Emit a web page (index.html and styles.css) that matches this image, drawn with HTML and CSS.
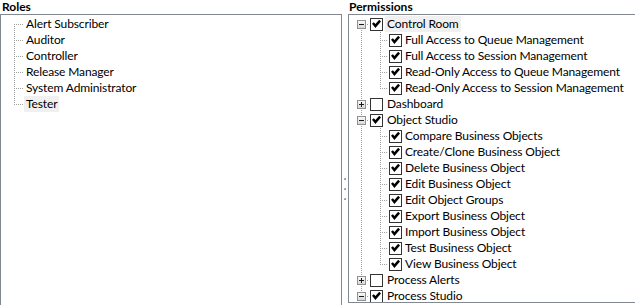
FILE: index.html
```html
<!DOCTYPE html>
<html>
<head>
<meta charset="utf-8">
<link rel="stylesheet" href="styles.css">
</head>
<body>
<div class="app">
  <section class="pane pane-roles">
    <div class="pane-title">Roles</div>
    <div class="box box-roles">
      <ul class="tree roles-tree">
        <li><div class="row"><span class="label">Alert Subscriber</span></div></li>
        <li><div class="row"><span class="label">Auditor</span></div></li>
        <li><div class="row"><span class="label">Controller</span></div></li>
        <li><div class="row"><span class="label">Release Manager</span></div></li>
        <li><div class="row"><span class="label">System Administrator</span></div></li>
        <li><div class="row"><span class="label selected">Tester</span></div></li>
      </ul>
    </div>
  </section>
  <div class="splitter">
    <span class="grip"></span>
    <span class="grip"></span>
    <span class="grip"></span>
  </div>
  <section class="pane pane-perms">
    <div class="pane-title">Permissions</div>
    <div class="box box-perms">
      <ul class="tree perm-tree">
        <li>
          <div class="row"><span class="exp minus"></span><span class="cb checked"></span><span class="label selected">Control Room</span></div>
          <ul class="sub">
            <li><div class="row"><span class="cb checked"></span><span class="label">Full Access to Queue Management</span></div></li>
            <li><div class="row"><span class="cb checked"></span><span class="label">Full Access to Session Management</span></div></li>
            <li><div class="row"><span class="cb checked"></span><span class="label">Read-Only Access to Queue Management</span></div></li>
            <li><div class="row"><span class="cb checked"></span><span class="label">Read-Only Access to Session Management</span></div></li>
          </ul>
        </li>
        <li><div class="row"><span class="exp plus"></span><span class="cb"></span><span class="label">Dashboard</span></div></li>
        <li>
          <div class="row"><span class="exp minus"></span><span class="cb checked"></span><span class="label">Object Studio</span></div>
          <ul class="sub">
            <li><div class="row"><span class="cb checked"></span><span class="label">Compare Business Objects</span></div></li>
            <li><div class="row"><span class="cb checked"></span><span class="label">Create/Clone Business Object</span></div></li>
            <li><div class="row"><span class="cb checked"></span><span class="label">Delete Business Object</span></div></li>
            <li><div class="row"><span class="cb checked"></span><span class="label">Edit Business Object</span></div></li>
            <li><div class="row"><span class="cb checked"></span><span class="label">Edit Object Groups</span></div></li>
            <li><div class="row"><span class="cb checked"></span><span class="label">Export Business Object</span></div></li>
            <li><div class="row"><span class="cb checked"></span><span class="label">Import Business Object</span></div></li>
            <li><div class="row"><span class="cb checked"></span><span class="label">Test Business Object</span></div></li>
            <li><div class="row"><span class="cb checked"></span><span class="label">View Business Object</span></div></li>
          </ul>
        </li>
        <li><div class="row"><span class="exp plus"></span><span class="cb"></span><span class="label">Process Alerts</span></div></li>
        <li><div class="row"><span class="exp minus"></span><span class="cb checked"></span><span class="label">Process Studio</span></div></li>
        <li class="more"><div class="row"></div></li>
      </ul>
    </div>
  </section>
</div>
</body>
</html>
```

FILE: styles.css
```css
* { box-sizing: border-box; }
html, body { margin: 0; padding: 0; background: #ffffff; }
body {
  font-family: "Segoe UI", Lato, "Noto Sans", sans-serif;
  font-size: 12px;
  color: #000000;
}
.app {
  display: flex;
  width: 635px;
  height: 305px;
  overflow: hidden;
}
.pane {
  display: flex;
  flex-direction: column;
  flex: none;
}
.pane-roles { width: 342px; height: 330px; }
.pane-perms { width: 300px; }
.pane-title {
  height: 14px;
  line-height: 14px;
  font-weight: bold;
  padding-left: 2px;
  white-space: nowrap;
}
.pane-perms .pane-title { padding-left: 1px; }
.box {
  border: 1px solid #828790;
  background: #ffffff;
  overflow: hidden;
}
.box-roles { flex: 1; }
.box-perms { height: 289px; }

.splitter {
  width: 6px;
  flex: none;
  display: flex;
  flex-direction: column;
  align-items: flex-start;
  gap: 8px;
  padding-top: 178px;
  padding-left: 2px;
}
.grip {
  width: 2px;
  height: 2px;
  background: #c4c4c4;
  box-shadow: inset -1px -1px 0 #9a9a9a;
}

ul.tree, ul.sub {
  list-style: none;
  margin: 0;
  padding: 0;
}
ul.tree { padding-top: 1px; }
.tree li { position: relative; }
.row {
  height: 16px;
  display: flex;
  align-items: center;
  white-space: nowrap;
  position: relative;
}
.label {
  display: block;
  height: 16px;
  line-height: 16px;
  padding: 0 2px;
  letter-spacing: -0.12px;
}
.label.selected { background: #f0f0f0; }

/* dotted connector lines */
.tree li::before {
  content: "";
  position: absolute;
  top: 0;
  bottom: 0;
  width: 1px;
  background: repeating-linear-gradient(to bottom, #a0a0a0 0 1px, transparent 1px 2px);
}
.tree li:first-child::before { top: 8px; }
.tree li:last-child::before { bottom: auto; height: 9px; }
.row::before {
  content: "";
  position: absolute;
  top: 8px;
  height: 1px;
  background: repeating-linear-gradient(to right, #a0a0a0 0 1px, transparent 1px 2px);
}

/* roles tree */
.roles-tree > li::before { left: 13px; }
.roles-tree .row { padding-left: 23px; }
.roles-tree .row::before { left: 13px; width: 10px; }

/* permissions tree */
.perm-tree > li::before { left: 12px; }
.perm-tree > li > .row { padding-left: 8px; }
.perm-tree > li > .row::before { left: 12px; width: 8px; }
.perm-tree .sub > li::before { left: 31px; }
.perm-tree .sub > li:first-child::before { top: 0; }
.perm-tree .sub > li > .row { padding-left: 40px; }
.perm-tree .sub > li > .row::before { left: 31px; width: 8px; }
.perm-tree li.more .row::before { display: none; }

.exp {
  width: 9px;
  height: 9px;
  flex: none;
  border: 1px solid #919191;
  background: linear-gradient(to bottom, #fafafa, #d8d8d8);
  position: relative;
  z-index: 1;
  margin-right: 4px;
}
.exp::before, .exp.plus::after {
  content: "";
  position: absolute;
  background: #1a1a1a;
}
.exp::before { left: 1px; top: 3px; width: 5px; height: 1px; }
.exp.plus::after { left: 3px; top: 1px; width: 1px; height: 5px; }

.cb {
  width: 13px;
  height: 13px;
  flex: none;
  border: 1px solid #333333;
  background: #ffffff;
  position: relative;
  z-index: 1;
  margin-right: 2px;
}
.cb.checked::after {
  content: "";
  position: absolute;
  left: 1px;
  top: 1px;
  width: 9px;
  height: 9px;
  background: #000000;
  clip-path: polygon(0 48%, 20% 30%, 38% 50%, 80% 4%, 100% 22%, 38% 94%);
}
.perm-tree .sub .cb { margin-right: 1px; }
```
